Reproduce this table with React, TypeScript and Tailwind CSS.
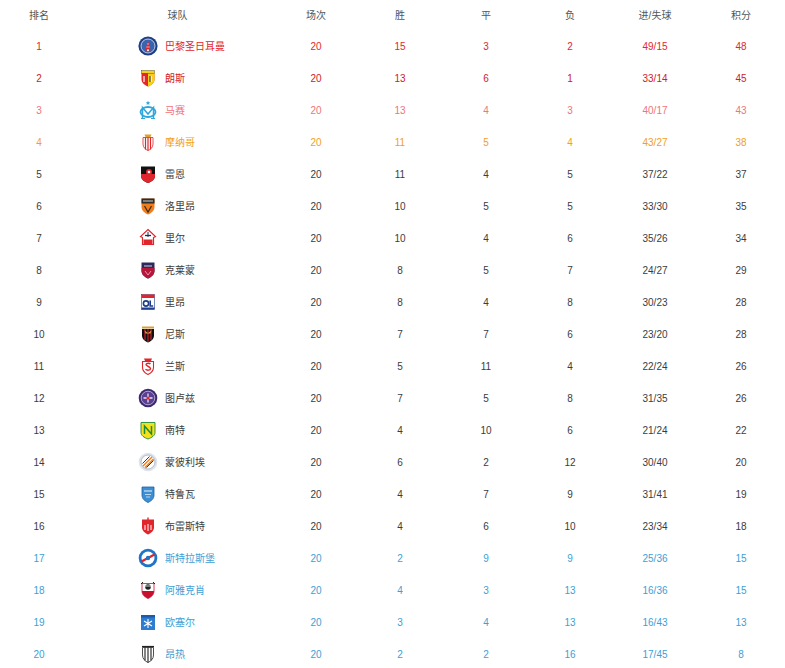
import React from 'react';

type Row = {
  rank: number;
  name: string;
  played: number;
  win: number;
  draw: number;
  lose: number;
  goals: string;
  pts: number;
  logo: React.ReactNode;
};

const Shield = ({ children }: { children: React.ReactNode }) => (
  <svg viewBox="0 0 20 20" className="w-5 h-5 shrink-0">
    {children}
  </svg>
);

const shieldPath = 'M3.5 2.5h13v8c0 4-3 6.5-6.5 8-3.5-1.5-6.5-4-6.5-8z';

const logos: Record<string, React.ReactNode> = {
  psg: (
    <Shield>
      <circle cx="10" cy="10" r="9.6" fill="#1c3f86" />
      <circle cx="10" cy="10" r="7" fill="#3b64b0" stroke="#dfe6f3" strokeWidth="0.8" />
      <path d="M10 4.5 L12.6 14.5 H7.4 Z" fill="#e0262c" />
      <path d="M8.3 11h3.4M9 8h2" stroke="#fff" strokeWidth="0.6" />
      <circle cx="10" cy="14.2" r="1" fill="#fff" />
    </Shield>
  ),
  lens: (
    <Shield>
      <path d="M3.5 5h13v6c0 4-3 6-6.5 7.5C6.5 17 3.5 15 3.5 11z" fill="#e4262b" />
      <path d="M10 5h6.5v6c0 4-3 6-6.5 7.5z" fill="#f7d118" />
      <rect x="3.5" y="2.5" width="13" height="2.8" fill="#f7d118" stroke="#333" strokeWidth="0.4" />
      <path d="M6 8v6M13 8v6" stroke="#fff" strokeWidth="1.2" />
      <path d="M12 8v6" stroke="#222" strokeWidth="1" />
    </Shield>
  ),
  om: (
    <Shield>
      <path d="M10 0.8l0.7 1.4 1.5 0.2-1.1 1 0.3 1.5-1.4-0.8-1.4 0.8 0.3-1.5-1.1-1 1.5-0.2z" fill="#2fa6dc" />
      <ellipse cx="10" cy="12" rx="7.5" ry="5" fill="none" stroke="#2fa6dc" strokeWidth="1.8" />
      <path d="M4.5 18.5V7.5L10 14l5.5-6.5v11" fill="none" stroke="#2fa6dc" strokeWidth="1.5" />
      <path d="M3 18.5h4M13 18.5h4" stroke="#2fa6dc" strokeWidth="1" />
    </Shield>
  ),
  monaco: (
    <Shield>
      <path d="M6.5 2.5h7l-1 2.5h-5z" fill="#e0a12a" />
      <path d="M5 5.5h10v6.5c0 3.5-2.5 5.5-5 6.5-2.5-1-5-3-5-6.5z" fill="#fff" stroke="#e0262c" strokeWidth="0.8" />
      <path d="M7.5 5.5v12M10 5.5v13M12.5 5.5v12" stroke="#e0262c" strokeWidth="1.2" />
    </Shield>
  ),
  rennes: (
    <Shield>
      <path d="M3 2.5h14v9c0 4-3 6-7 7.5-4-1.5-7-3.5-7-7.5z" fill="#111" />
      <path d="M3 10h14v1.5c0 4-3 6-7 7.5-4-1.5-7-3.5-7-7.5z" fill="#e0262c" />
      <circle cx="11" cy="8" r="3" fill="#e0262c" />
      <circle cx="11" cy="8" r="1.3" fill="#fff" />
    </Shield>
  ),
  lorient: (
    <Shield>
      <path d={shieldPath} fill="#f07d1a" />
      <rect x="3.5" y="2.5" width="13" height="5" fill="#2c2c2c" />
      <path d="M5 5h10" stroke="#fff" strokeWidth="0.8" />
      <path d="M6.5 10l3.5 6 3.5-6" fill="none" stroke="#3a2a1a" strokeWidth="1.2" />
    </Shield>
  ),
  lille: (
    <Shield>
      <path d="M10 1.5l7.5 7-2 1v7h-11v-7l-2-1z" fill="#fff" stroke="#e0262c" strokeWidth="1.2" />
      <path d="M5.5 11.5h9v4.5h-9z" fill="#e0262c" />
      <path d="M7 7.5h6" stroke="#1d2b5c" strokeWidth="1.3" />
      <path d="M10 4v5" stroke="#1d2b5c" strokeWidth="1" />
    </Shield>
  ),
  clermont: (
    <Shield>
      <path d={shieldPath} fill="#2b2a5c" />
      <path d="M3.5 8h13v2.5c0 4-3 6.5-6.5 8-3.5-1.5-6.5-4-6.5-8z" fill="#b5173a" />
      <path d="M6 6h8" stroke="#fff" strokeWidth="0.8" />
      <path d="M7 11l3 4 3-4" fill="none" stroke="#f08fb0" strokeWidth="1" />
    </Shield>
  ),
  lyon: (
    <Shield>
      <rect x="3.5" y="2.5" width="13" height="15" fill="#fff" stroke="#1d3d8a" strokeWidth="0.6" />
      <rect x="3.5" y="2.5" width="13" height="3.5" fill="#e0262c" />
      <circle cx="8" cy="11.5" r="2.6" fill="none" stroke="#1d3d8a" strokeWidth="1.6" />
      <path d="M12.2 8.5v5.5h3" fill="none" stroke="#1d3d8a" strokeWidth="1.6" />
      <rect x="3.5" y="15.5" width="13" height="2" fill="#1d3d8a" />
    </Shield>
  ),
  nice: (
    <Shield>
      <path d="M4 2.5h12v2H4z" fill="#d4a23a" />
      <path d="M4 5h12v6.5c0 3.5-2.5 5.5-6 7-3.5-1.5-6-3.5-6-7z" fill="#111" />
      <path d="M7 5v11M10 5v13M13 5v11" stroke="#d0202a" strokeWidth="1.2" />
      <path d="M6.5 6.5l3.5 2.5 3.5-2.5-1 3h-5z" fill="#d4a23a" />
    </Shield>
  ),
  reims: (
    <Shield>
      <path d="M6 2.5h8l-1 2.5H7z" fill="#e0262c" />
      <path d="M4.5 5.5h11v6c0 3.5-2.5 5.5-5.5 7-3-1.5-5.5-3.5-5.5-7z" fill="#fff" stroke="#e0262c" strokeWidth="1.1" />
      <path d="M12.5 8c-1-1-4-1-4.5 0.5s4.5 2 4.5 4-3.5 2.2-5 0.8" fill="none" stroke="#e0262c" strokeWidth="1.4" />
    </Shield>
  ),
  toulouse: (
    <Shield>
      <circle cx="10" cy="10" r="9.3" fill="#3b2a6e" />
      <circle cx="10" cy="10" r="6.8" fill="#5a3f93" stroke="#c9bde0" strokeWidth="0.8" />
      <path d="M10 5.5v9M5.5 10h9" stroke="#e7e0f2" strokeWidth="1.3" />
      <circle cx="10" cy="10" r="1.6" fill="#e0262c" />
    </Shield>
  ),
  nantes: (
    <Shield>
      <path d="M3 2.5h14v10c0 3-3 5-7 6.5-4-1.5-7-3.5-7-6.5z" fill="#f4e11b" stroke="#1f8a3a" strokeWidth="0.9" />
      <path d="M6.5 14V6l7 8V6" fill="none" stroke="#1f8a3a" strokeWidth="1.5" />
    </Shield>
  ),
  montpellier: (
    <Shield>
      <circle cx="10" cy="10" r="9.3" fill="#dfe3ea" />
      <circle cx="10" cy="10" r="7" fill="#fff" stroke="#9aa3b4" strokeWidth="0.7" />
      <path d="M5 14L14 5M7 15.5L15.5 7" stroke="#f07d1a" strokeWidth="1.4" />
      <path d="M4.5 11.5L11.5 4.5M8.5 15.5L15.5 8.5" stroke="#1d3d8a" strokeWidth="1" />
    </Shield>
  ),
  troyes: (
    <Shield>
      <path d="M4 3h12v8c0 4-3 6-6 7.5-3-1.5-6-3.5-6-7.5z" fill="#3d8fd4" stroke="#1e5fa3" strokeWidth="0.8" />
      <path d="M6 7h8" stroke="#fff" strokeWidth="0.9" />
      <path d="M7 10.5h6M8 13h4" stroke="#d8ebf9" strokeWidth="0.8" />
    </Shield>
  ),
  brest: (
    <Shield>
      <path d="M4 3.5h12v7.5c0 4-3 6-6 7.5-3-1.5-6-3.5-6-7.5z" fill="#e0262c" />
      <path d="M10 1.5v4" stroke="#e0262c" strokeWidth="1.4" />
      <path d="M7 9v5M10 8v7M13 9v5" stroke="#fff" strokeWidth="1" />
    </Shield>
  ),
  strasbourg: (
    <Shield>
      <circle cx="10" cy="10" r="9.3" fill="#1e74c6" />
      <circle cx="10" cy="10" r="6.5" fill="#fff" />
      <path d="M3.5 13.5L16.5 6.5" stroke="#e0262c" strokeWidth="2.4" />
      <circle cx="10" cy="10" r="2.2" fill="#1e74c6" />
    </Shield>
  ),
  ajaccio: (
    <Shield>
      <path d="M4 3.5h12v7.5c0 4-3 6-6 7.5-3-1.5-6-3.5-6-7.5z" fill="#fff" stroke="#c8102e" strokeWidth="0.8" />
      <path d="M4 11h12c0 4-3 6-6 7.5-3-1.5-6-3.5-6-7.5z" fill="#c8102e" />
      <circle cx="10" cy="7" r="2.8" fill="#222" />
      <path d="M7 6h6" stroke="#fff" strokeWidth="0.8" />
      <path d="M3 4l2-2M17 4l-2-2" stroke="#222" strokeWidth="1" />
    </Shield>
  ),
  auxerre: (
    <Shield>
      <rect x="3" y="3" width="14" height="15" fill="#2f7bd0" />
      <rect x="3" y="3" width="14" height="2.5" fill="#1d5aa8" />
      <path d="M10 7v9M6 9l8 5M14 9l-8 5" stroke="#fff" strokeWidth="1.1" />
    </Shield>
  ),
  angers: (
    <Shield>
      <path d="M4.5 3.5h11v7.5c0 4-2.5 6-5.5 7.5-3-1.5-5.5-3.5-5.5-7.5z" fill="#fff" stroke="#222" strokeWidth="0.8" />
      <path d="M7 3.5v13M10 3.5v15M13 3.5v13" stroke="#222" strokeWidth="1.1" />
      <path d="M4 2.5h12" stroke="#222" strokeWidth="1.2" />
    </Shield>
  ),
};

const rows: Row[] = [
  { rank: 1, name: '巴黎圣日耳曼', played: 20, win: 15, draw: 3, lose: 2, goals: '49/15', pts: 48, logo: logos.psg },
  { rank: 2, name: '朗斯', played: 20, win: 13, draw: 6, lose: 1, goals: '33/14', pts: 45, logo: logos.lens },
  { rank: 3, name: '马赛', played: 20, win: 13, draw: 4, lose: 3, goals: '40/17', pts: 43, logo: logos.om },
  { rank: 4, name: '摩纳哥', played: 20, win: 11, draw: 5, lose: 4, goals: '43/27', pts: 38, logo: logos.monaco },
  { rank: 5, name: '雷恩', played: 20, win: 11, draw: 4, lose: 5, goals: '37/22', pts: 37, logo: logos.rennes },
  { rank: 6, name: '洛里昂', played: 20, win: 10, draw: 5, lose: 5, goals: '33/30', pts: 35, logo: logos.lorient },
  { rank: 7, name: '里尔', played: 20, win: 10, draw: 4, lose: 6, goals: '35/26', pts: 34, logo: logos.lille },
  { rank: 8, name: '克莱蒙', played: 20, win: 8, draw: 5, lose: 7, goals: '24/27', pts: 29, logo: logos.clermont },
  { rank: 9, name: '里昂', played: 20, win: 8, draw: 4, lose: 8, goals: '30/23', pts: 28, logo: logos.lyon },
  { rank: 10, name: '尼斯', played: 20, win: 7, draw: 7, lose: 6, goals: '23/20', pts: 28, logo: logos.nice },
  { rank: 11, name: '兰斯', played: 20, win: 5, draw: 11, lose: 4, goals: '22/24', pts: 26, logo: logos.reims },
  { rank: 12, name: '图卢兹', played: 20, win: 7, draw: 5, lose: 8, goals: '31/35', pts: 26, logo: logos.toulouse },
  { rank: 13, name: '南特', played: 20, win: 4, draw: 10, lose: 6, goals: '21/24', pts: 22, logo: logos.nantes },
  { rank: 14, name: '蒙彼利埃', played: 20, win: 6, draw: 2, lose: 12, goals: '30/40', pts: 20, logo: logos.montpellier },
  { rank: 15, name: '特鲁瓦', played: 20, win: 4, draw: 7, lose: 9, goals: '31/41', pts: 19, logo: logos.troyes },
  { rank: 16, name: '布雷斯特', played: 20, win: 4, draw: 6, lose: 10, goals: '23/34', pts: 18, logo: logos.brest },
  { rank: 17, name: '斯特拉斯堡', played: 20, win: 2, draw: 9, lose: 9, goals: '25/36', pts: 15, logo: logos.strasbourg },
  { rank: 18, name: '阿雅克肖', played: 20, win: 4, draw: 3, lose: 13, goals: '16/36', pts: 15, logo: logos.ajaccio },
  { rank: 19, name: '欧塞尔', played: 20, win: 3, draw: 4, lose: 13, goals: '16/43', pts: 13, logo: logos.auxerre },
  { rank: 20, name: '昂热', played: 20, win: 2, draw: 2, lose: 16, goals: '17/45', pts: 8, logo: logos.angers },
];

const tone = (rank: number) => {
  if (rank === 1) return 'text-[#e2262d]';
  if (rank === 2) return 'text-[#d02029]';
  if (rank === 3) return 'text-[#f0747a]';
  if (rank === 4) return 'text-[#f2a023]';
  if (rank >= 17) return 'text-[#3c9fd6]';
  return 'text-[#3c3c3c]';
};

const cols = 'grid grid-cols-[78px_199px_78px_90px_82px_86px_84px_88px] items-center';

export default function App() {
  return (
    <div className="w-[785px] bg-white text-[10px] font-['Liberation_Sans','Noto_Sans_CJK_SC',sans-serif]">
      {/* 表头 */}
      <div className={`${cols} h-[30px] text-[#555555] text-center`}>
        <div>排名</div>
        <div>球队</div>
        <div>场次</div>
        <div>胜</div>
        <div>平</div>
        <div>负</div>
        <div>进/失球</div>
        <div>积分</div>
      </div>

      {rows.map((r) => (
        <div key={r.rank} className={`${cols} h-8 text-center ${tone(r.rank)}`}>
          <div>{r.rank}</div>
          <div className="flex items-center gap-[7px] pl-[60px] text-left">
            {r.logo}
            <span>{r.name}</span>
          </div>
          <div>{r.played}</div>
          <div>{r.win}</div>
          <div>{r.draw}</div>
          <div>{r.lose}</div>
          <div>{r.goals}</div>
          <div>{r.pts}</div>
        </div>
      ))}
    </div>
  );
}
